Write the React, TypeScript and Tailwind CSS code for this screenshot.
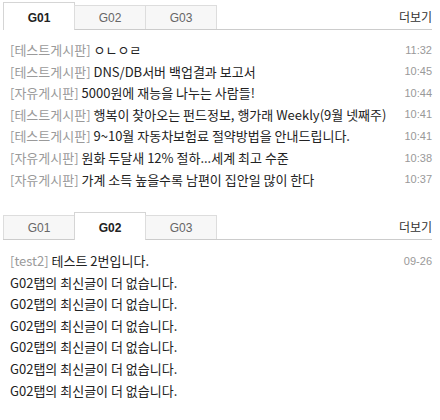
const font = { fontFamily: '"Noto Sans CJK KR", "Noto Sans", sans-serif' };

type Row = { board: string; title: string; time?: string };

const latest: Row[] = [
  { board: "테스트게시판", title: "ㅇㄴㅇㄹ", time: "11:32" },
  { board: "테스트게시판", title: "DNS/DB서버 백업결과 보고서", time: "10:45" },
  { board: "자유게시판", title: "5000원에 재능을 나누는 사람들!", time: "10:44" },
  { board: "테스트게시판", title: "행복이 찾아오는 펀드정보, 행가래 Weekly(9월 넷째주)", time: "10:41" },
  { board: "테스트게시판", title: "9~10월 자동차보험료 절약방법을 안내드립니다.", time: "10:41" },
  { board: "자유게시판", title: "원화 두달새 12% 절하...세계 최고 수준", time: "10:38" },
  { board: "자유게시판", title: "가계 소득 높을수록 남편이 집안일 많이 한다", time: "10:37" },
];

const empty = "G02탭의 최신글이 더 없습니다.";

function Tabs({ active }: { active: number }) {
  return (
    <div className="flex items-end border-b border-[#cccccc] h-[28px]">
      {["G01", "G02", "G03"].map((t, i) =>
        i === active ? (
          <div
            key={t}
            className="-ml-px first:ml-0 w-[72px] h-[28px] -mb-px pt-[2px] flex items-center justify-center bg-white border border-b-0 border-[#d5d5d5] text-[12px] font-bold text-[#222]"
            style={{ fontFamily: '"Liberation Sans", Arial, sans-serif' }}
          >
            {t}
          </div>
        ) : (
          <div
            key={t}
            className="-ml-px first:ml-0 w-[72px] h-[24px] flex items-center justify-center bg-[#f7f7f7] border border-b-0 border-[#dddddd] text-[12px] text-[#666]"
            style={{ fontFamily: '"Liberation Sans", Arial, sans-serif' }}
          >
            {t}
          </div>
        )
      )}
      <div className="flex-1 flex justify-end items-center h-[28px] pt-[3px] text-[12px] text-[#333]">
        더보기
      </div>
    </div>
  );
}

function Item({ row }: { row: Row }) {
  return (
    <li className="flex items-center justify-between h-[21.6px] pl-[7px]">
      <span className="whitespace-nowrap text-[13px] text-[#222]">
        {row.board && <span className="text-[#9a9a9a]">[{row.board}] </span>}
        {row.title}
      </span>
      {row.time && (
        <span
          className="text-[11px] text-[#999]"
          style={{ fontFamily: '"Liberation Sans", Arial, sans-serif' }}
        >
          {row.time}
        </span>
      )}
    </li>
  );
}

export default function App() {
  return (
    <div className="w-[440px] h-[420px] bg-white overflow-hidden pl-[3px] pr-[8px]" style={font}>
      {/* G01 */}
      <section className="pt-[2px] h-[210px]">
        <Tabs active={0} />
        <ul className="pt-[9px]">
          {latest.map((r, i) => (
            <Item key={i} row={r} />
          ))}
        </ul>
      </section>

      {/* G02 */}
      <section className="pt-[2px]">
        <Tabs active={1} />
        <ul className="pt-[10px]">
          <Item row={{ board: "test2", title: "테스트 2번입니다.", time: "09-26" }} />
          {Array.from({ length: 6 }).map((_, i) => (
            <Item key={i} row={{ board: "", title: empty }} />
          ))}
        </ul>
      </section>
    </div>
  );
}
